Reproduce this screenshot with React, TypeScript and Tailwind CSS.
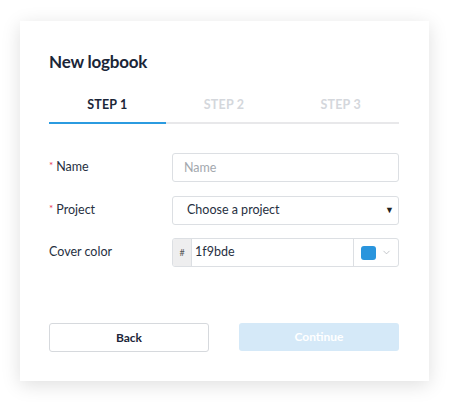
import React, { useState } from 'react';
import { ChevronDown } from 'lucide-react';

const steps = ['STEP 1', 'STEP 2', 'STEP 3'];

export default function App() {
  const [name, setName] = useState('');
  const [color, setColor] = useState('1f9bde');

  return (
    <div className="w-[449px] h-[402px] bg-white pt-[21px] pl-[20px] font-['Lato',_sans-serif]">
      <div className="w-[409px] h-[360px] bg-white shadow-[0_4px_18px_rgba(0,0,0,0.13)] pt-[29px] pl-[29px] pr-[30px] flex flex-col">
        {/* Header */}
        <h1 className="h-6 leading-6 text-[17px] font-bold text-[#1b2638] tracking-[-0.2px]">New logbook</h1>

        {/* Step tabs */}
        <div className="mt-[22px] flex">
          {steps.map((s, i) => (
            <div
              key={s}
              className={`flex-1 text-center text-[12.5px] tracking-[0.2px] font-bold leading-[18px] pb-2 border-b-2 ${
                i === 0 ? 'text-[#1b2638] border-[#2b9be0]' : 'text-[#d4d7dc] border-[#e8e8ea]'
              }`}
            >
              {s}
            </div>
          ))}
        </div>

        {/* Form */}
        <div className="mt-[29px] flex flex-col gap-[13.5px] text-[12.5px] text-[#27303f]">
          <div className="flex items-center">
            <label className="w-[123px] flex items-center">
              <span className="text-[#e8344e] text-[10px] mr-[3px] -mt-1">*</span>Name
            </label>
            <input
              value={name}
              onChange={(e) => setName(e.target.value)}
              placeholder="Name"
              className="w-[227px] h-[29px] rounded-[3px] border border-[#dcdfe3] px-[11px] text-[12.5px] placeholder:text-[#a3a8ae] outline-none"
            />
          </div>

          <div className="flex items-center">
            <label className="w-[123px] flex items-center">
              <span className="text-[#e8344e] text-[10px] mr-[3px] -mt-1">*</span>Project
            </label>
            <div className="w-[227px] h-[29px] rounded-[3px] border border-[#dcdfe3] pl-[14px] pr-[4px] flex items-center justify-between">
              <span>Choose a project</span>
              <span className="text-[9px] text-[#222]">▼</span>
            </div>
          </div>

          <div className="flex items-center">
            <label className="w-[123px]">Cover color</label>
            <div className="w-[227px] h-[29px] rounded-[3px] border border-[#dcdfe3] flex overflow-hidden">
              <div className="w-[19px] bg-[#eeeeef] border-r border-[#dcdfe3] flex items-center justify-center text-[9px] text-[#555]">
                #
              </div>
              <input
                value={color}
                onChange={(e) => setColor(e.target.value)}
                className="flex-1 min-w-0 pl-[3px] text-[12.5px] outline-none"
              />
              <div className="w-[45px] border-l border-[#dcdfe3] flex items-center pl-[7px] gap-[5px]">
                <div className="w-[15px] h-[14px] rounded-[3px] bg-[#2a95dd]" />
                <ChevronDown className="w-[11px] h-[11px] text-[#a9adb3]" strokeWidth={1.5} />
              </div>
            </div>
          </div>
        </div>

        {/* Actions */}
        <div className="mt-auto mb-[29px] flex justify-between">
          <button className="w-[160px] h-[29px] rounded-[3px] border border-[#d6d9dd] bg-white text-[12px] font-bold text-[#1b2638]">
            Back
          </button>
          <button disabled className="w-[160px] h-[28px] rounded-[3px] bg-[#d5e9f8] text-[12px] font-bold text-white">
            Continue
          </button>
        </div>
      </div>
    </div>
  );
}
